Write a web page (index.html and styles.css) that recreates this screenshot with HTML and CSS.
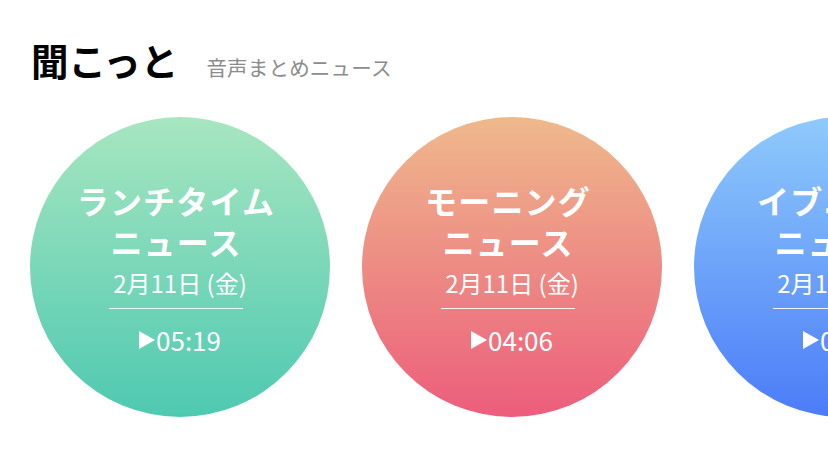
FILE: index.html
```html
<!DOCTYPE html>
<html lang="ja">
<head>
<meta charset="utf-8">
<title>聞こっと</title>
<link rel="stylesheet" href="styles.css">
</head>
<body>
<header class="header">
  <h1 class="brand">聞こっと</h1>
  <span class="tagline">音声まとめニュース</span>
</header>
<main class="row">
  <a class="bubble green" href="#">
    <div class="title">ランチタイム<br>ニュース</div>
    <div class="date">2月11日 (金)</div>
    <div class="divider"></div>
    <div class="time"><svg class="play" viewBox="0 0 16 18" width="16" height="18"><path d="M0 0 L16 9 L0 18 Z" fill="#fff"/></svg>05:19</div>
  </a>
  <a class="bubble orange" href="#">
    <div class="title">モーニング<br>ニュース</div>
    <div class="date">2月11日 (金)</div>
    <div class="divider"></div>
    <div class="time"><svg class="play" viewBox="0 0 16 18" width="16" height="18"><path d="M0 0 L16 9 L0 18 Z" fill="#fff"/></svg>04:06</div>
  </a>
  <a class="bubble blue" href="#">
    <div class="title">イブニング<br>ニュース</div>
    <div class="date">2月11日 (金)</div>
    <div class="divider"></div>
    <div class="time"><svg class="play" viewBox="0 0 16 18" width="16" height="18"><path d="M0 0 L16 9 L0 18 Z" fill="#fff"/></svg>06:12</div>
  </a>
</main>
</body>
</html>
```
FILE: styles.css
```css
html, body {
  margin: 0;
  padding: 0;
  background: #ffffff;
  overflow: hidden;
}
body {
  font-family: "Noto Sans CJK JP", "Noto Sans", sans-serif;
  width: 828px;
  height: 466px;
}
.header {
  display: flex;
  align-items: baseline;
  gap: 28px;
  padding: 41px 0 0 31px;
}
.brand {
  margin: 0;
  font-size: 37.5px;
  line-height: 38px;
  font-weight: 700;
  color: #000;
}
.tagline {
  font-size: 20.5px;
  line-height: 21px;
  color: #8c8c8c;
  letter-spacing: 0.2px;
}
.row {
  display: flex;
  gap: 32px;
  padding: 38px 0 0 30px;
}
.bubble {
  flex: 0 0 auto;
  width: 300px;
  height: 300px;
  border-radius: 50%;
  display: flex;
  flex-direction: column;
  align-items: center;
  justify-content: center;
  color: #fff;
  text-decoration: none;
}
.green { background: linear-gradient(180deg, #a7e6c0 0%, #4ec9b1 100%); }
.orange { background: linear-gradient(180deg, #efb98c 0%, #ec5d7c 100%); }
.blue { background: linear-gradient(180deg, #8fcafb 0%, #4b7cf8 100%); }
.title {
  font-size: 32px;
  line-height: 41px;
  font-weight: 700;
  text-align: center;
  letter-spacing: 1.2px;
  margin-right: 8px;
}
.date {
  margin-top: 7px;
  font-size: 24px;
  line-height: 28px;
}
.divider {
  margin-top: 11px;
  margin-right: 8px;
  width: 134px;
  height: 1px;
  background: rgba(255, 255, 255, 0.9);
}
.time {
  margin-top: 17px;
  font-size: 26px;
  line-height: 28px;
  display: flex;
  align-items: center;
}
.play {
  display: block;
  margin-right: 1px;
}
```
